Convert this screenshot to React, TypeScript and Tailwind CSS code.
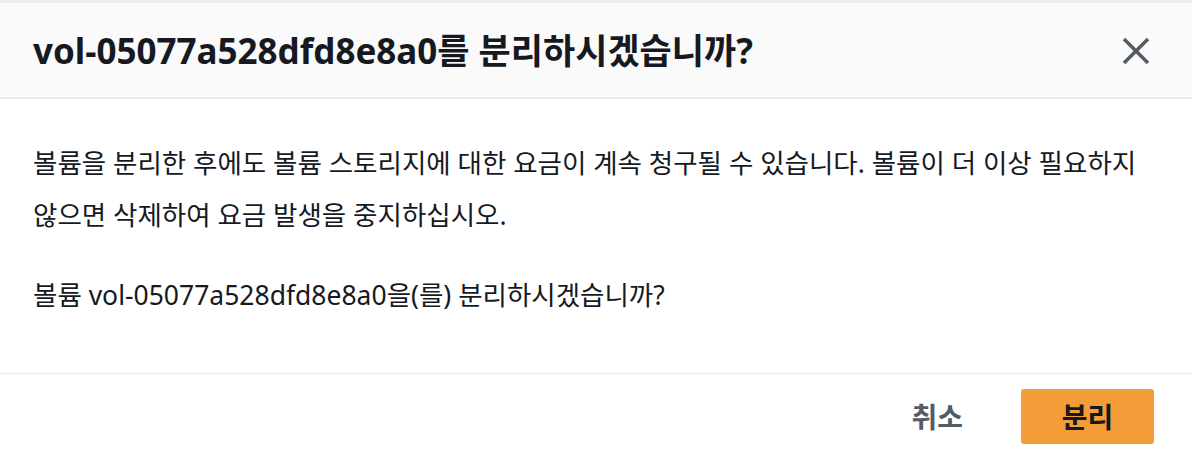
const font = { fontFamily: '"Noto Sans", "Noto Sans CJK KR", sans-serif' }

function CloseIcon() {
  return (
    <svg width="30" height="30" viewBox="0 0 30 30" fill="none">
      <path d="M3 3L27 27M27 3L3 27" stroke="#545b64" strokeWidth="3.4" />
    </svg>
  )
}

export default function App() {
  return (
    <div className="w-[1192px] h-[460px] bg-white flex flex-col overflow-hidden" style={font}>
      <div className="h-[3px] bg-[#eaeded]" />
      <div className="h-[96px] bg-[#fafafa] border-b-2 border-[#eaeded] flex items-center justify-between pl-[33px] pr-[41px]">
        <h2 className="text-[35px] font-bold text-[#16191f] leading-none">
          vol-05077a528dfd8e8a0를 분리하시겠습니까?
        </h2>
        <button className="mt-[2px]">
          <CloseIcon />
        </button>
      </div>
      <div className="flex-1 px-[33px] pt-[38px] text-[26.5px] text-[#16191f] leading-[52px]">
        <p>
          볼륨을 분리한 후에도 볼륨 스토리지에 대한 요금이 계속 청구될 수 있습니다. 볼륨이 더 이상 필요하지
          않으면 삭제하여 요금 발생을 중지하십시오.
        </p>
        <p className="mt-[28px]">볼륨 vol-05077a528dfd8e8a0을(를) 분리하시겠습니까?</p>
      </div>
      <div className="border-t border-[#eaeded] h-[87px] flex items-center justify-end gap-[58px] pr-[38px] pb-[1px]">
        <button className="text-[28px] font-bold text-[#545b64]">취소</button>
        <button className="w-[133px] h-[55px] rounded-[3px] bg-[#f29d38] text-[28px] font-bold text-[#16191f]">
          분리
        </button>
      </div>
    </div>
  )
}
